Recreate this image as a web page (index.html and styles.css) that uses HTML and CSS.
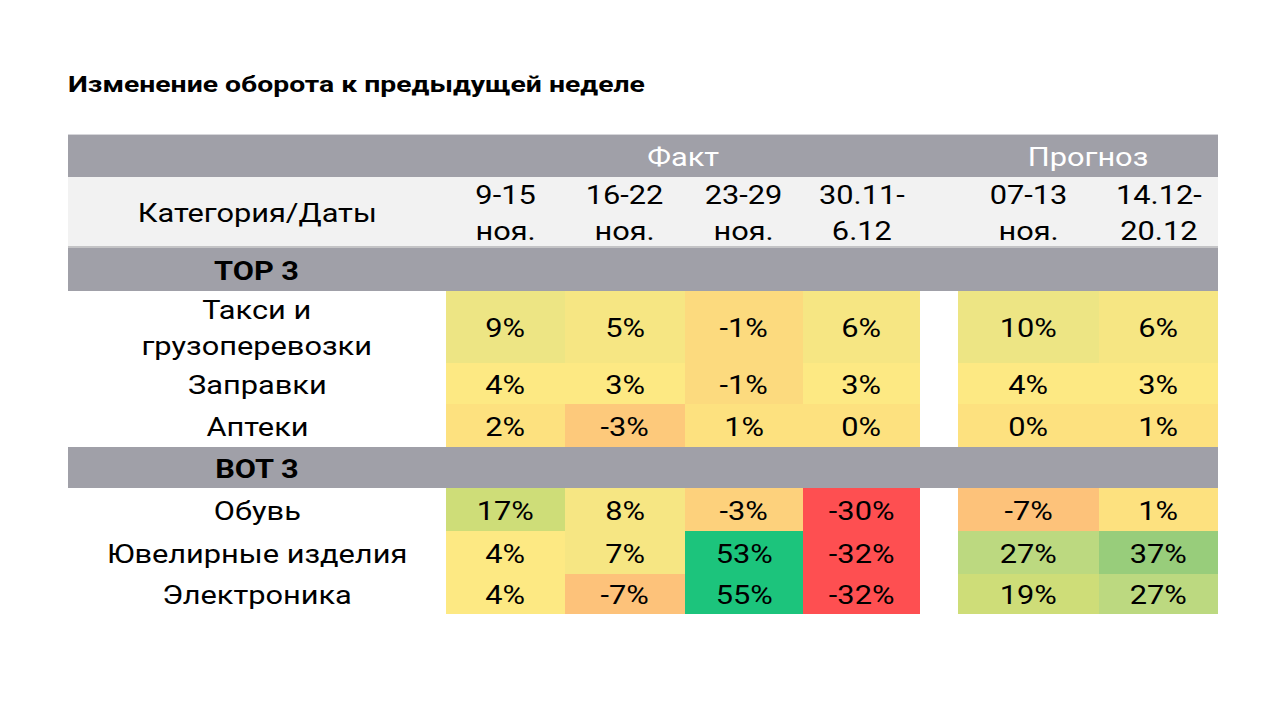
FILE: index.html
```html
<!DOCTYPE html>
<html lang="ru">
<head>
<meta charset="utf-8">
<title>Изменение оборота</title>
<link rel="stylesheet" href="styles.css">
</head>
<body>
<div class="page">
  <h1 class="title"><span class="tt">Изменение оборота к предыдущей неделе</span></h1>
  <div class="table">
    <div class="row head1">
      <div class="c"></div>
      <div class="c span4"><span class="t">Факт</span></div>
      <div class="c"></div>
      <div class="c span2"><span class="t">Прогноз</span></div>
    </div>
    <div class="row head2">
      <div class="c"><span class="t">Категория/Даты</span></div>
      <div class="c"><span class="t">9-15<br>ноя.</span></div>
      <div class="c"><span class="t">16-22<br>ноя.</span></div>
      <div class="c"><span class="t">23-29<br>ноя.</span></div>
      <div class="c"><span class="t">30.11-<br>6.12</span></div>
      <div class="c"></div>
      <div class="c"><span class="t">07-13<br>ноя.</span></div>
      <div class="c"><span class="t">14.12-<br>20.12</span></div>
    </div>
    <div class="row section h43">
      <div class="c"><span class="t">TOP 3</span></div>
    </div>
    <div class="row data h72">
      <div class="c cat"><span class="t">Такси и<br>грузоперевозки</span></div>
      <div class="c g1"><span class="t">9%</span></div>
      <div class="c y2"><span class="t">5%</span></div>
      <div class="c o1"><span class="t">-1%</span></div>
      <div class="c y2"><span class="t">6%</span></div>
      <div class="c gap"></div>
      <div class="c g1"><span class="t">10%</span></div>
      <div class="c y2"><span class="t">6%</span></div>
    </div>
    <div class="row data h41">
      <div class="c cat"><span class="t">Заправки</span></div>
      <div class="c y1"><span class="t">4%</span></div>
      <div class="c y1"><span class="t">3%</span></div>
      <div class="c o1"><span class="t">-1%</span></div>
      <div class="c y1"><span class="t">3%</span></div>
      <div class="c gap"></div>
      <div class="c y1"><span class="t">4%</span></div>
      <div class="c y1"><span class="t">3%</span></div>
    </div>
    <div class="row data h43">
      <div class="c cat"><span class="t">Аптеки</span></div>
      <div class="c y3"><span class="t">2%</span></div>
      <div class="c o2"><span class="t">-3%</span></div>
      <div class="c y3"><span class="t">1%</span></div>
      <div class="c y3"><span class="t">0%</span></div>
      <div class="c gap"></div>
      <div class="c y3"><span class="t">0%</span></div>
      <div class="c y3"><span class="t">1%</span></div>
    </div>
    <div class="row section h41">
      <div class="c"><span class="t">BOT 3</span></div>
    </div>
    <div class="row data h43">
      <div class="c cat"><span class="t">Обувь</span></div>
      <div class="c lg2"><span class="t">17%</span></div>
      <div class="c y2"><span class="t">8%</span></div>
      <div class="c o3"><span class="t">-3%</span></div>
      <div class="c red"><span class="t">-30%</span></div>
      <div class="c gap"></div>
      <div class="c o4"><span class="t">-7%</span></div>
      <div class="c y3"><span class="t">1%</span></div>
    </div>
    <div class="row data h43">
      <div class="c cat"><span class="t">Ювелирные изделия</span></div>
      <div class="c y1"><span class="t">4%</span></div>
      <div class="c y2"><span class="t">7%</span></div>
      <div class="c green"><span class="t">53%</span></div>
      <div class="c red"><span class="t">-32%</span></div>
      <div class="c gap"></div>
      <div class="c lg1"><span class="t">27%</span></div>
      <div class="c mg"><span class="t">37%</span></div>
    </div>
    <div class="row data h40">
      <div class="c cat"><span class="t">Электроника</span></div>
      <div class="c y1"><span class="t">4%</span></div>
      <div class="c o4"><span class="t">-7%</span></div>
      <div class="c green"><span class="t">55%</span></div>
      <div class="c red"><span class="t">-32%</span></div>
      <div class="c gap"></div>
      <div class="c lg2"><span class="t">19%</span></div>
      <div class="c lg1"><span class="t">27%</span></div>
    </div>
  </div>
</div>
</body>
</html>
```

FILE: styles.css
```css
html, body {
  margin: 0;
  padding: 0;
  background: #ffffff;
}

body {
  font-family: Roboto, "Noto Sans", "Liberation Sans", sans-serif;
  color: #000000;
}

.page {
  padding: 72px 62px 0 68px;
}

.title {
  margin: 0;
  font-size: 22.5px;
  line-height: 22px;
  font-weight: 700;
  white-space: nowrap;
}

.tt {
  display: inline-block;
  transform: translateY(1px) scaleX(1.26);
  transform-origin: left center;
}

.table {
  margin-top: 40px;
  width: 1150px;
  font-size: 25px;
}

.row {
  display: grid;
  grid-template-columns: 378px 119px 120px 118px 117px 38px 141px 119px;
}

.c {
  display: flex;
  align-items: center;
  justify-content: center;
  text-align: center;
  line-height: 36px;
}

.t {
  display: inline-block;
  transform: translateY(2px) scaleX(1.23);
  transform-origin: center center;
  white-space: nowrap;
}

.head2 .t {
  transform: translateY(1px) scaleX(1.23);
}

.span4 { grid-column: span 4; }
.span2 { grid-column: span 2; }

.head1 {
  height: 43px;
  background: #a0a0a8;
  color: #ffffff;
  box-sizing: border-box;
  border-top: 1px solid #d6d6da;
}

.head2 {
  height: 71px;
  background: #f2f2f2;
  box-sizing: border-box;
  border-bottom: 2px solid #c4c4c6;
}

.section {
  background: #a0a0a8;
  font-weight: 700;
}

.section .c {
  grid-column: 1;
}

.h40 { height: 40px; }
.h41 { height: 41px; }
.h43 { height: 43px; }
.h72 { height: 72px; }

.data .cat { background: #ffffff; }
.data .gap { background: #ffffff; }

.g1 { background: #ede584; }
.y1 { background: #fde983; }
.y2 { background: #f6e683; }
.y3 { background: #fde17f; }
.o1 { background: #fcda7e; }
.o2 { background: #fdc97b; }
.o3 { background: #fdd17c; }
.o4 { background: #fdc27a; }
.lg1 { background: #bcd980; }
.lg2 { background: #cedd78; }
.mg { background: #98cd7b; }
.green { background: #1cc47c; }
.red { background: #fe4f51; }
```
